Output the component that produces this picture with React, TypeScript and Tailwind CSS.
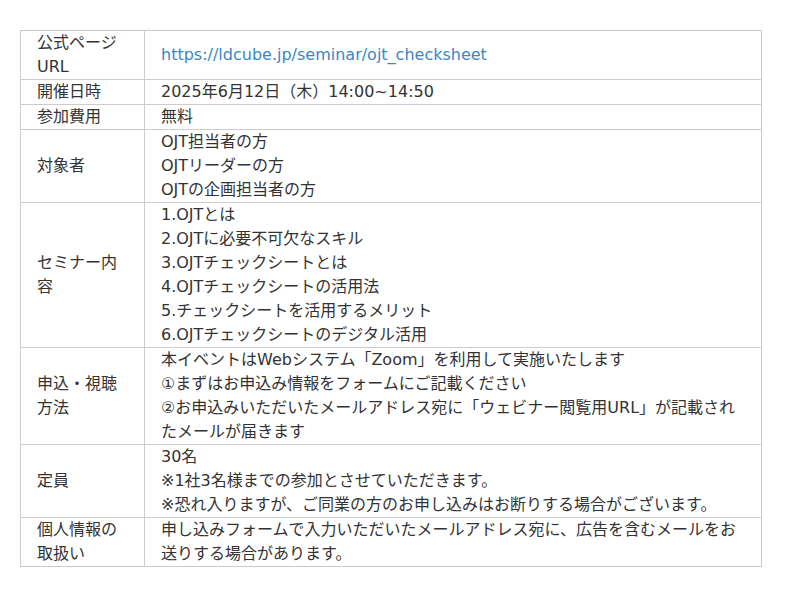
import React from "react";

const rows: { label: string; value: React.ReactNode }[] = [
  {
    label: "公式ページURL",
    value: (
      <a href="#" className="text-[#3a87c5] no-underline">
        https://ldcube.jp/seminar/ojt_checksheet
      </a>
    ),
  },
  { label: "開催日時", value: "2025年6月12日（木）14:00~14:50" },
  { label: "参加費用", value: "無料" },
  {
    label: "対象者",
    value: ["OJT担当者の方", "OJTリーダーの方", "OJTの企画担当者の方"],
  },
  {
    label: "セミナー内容",
    value: [
      "1.OJTとは",
      "2.OJTに必要不可欠なスキル",
      "3.OJTチェックシートとは",
      "4.OJTチェックシートの活用法",
      "5.チェックシートを活用するメリット",
      "6.OJTチェックシートのデジタル活用",
    ],
  },
  {
    label: "申込・視聴方法",
    value: [
      "本イベントはWebシステム「Zoom」を利用して実施いたします",
      "①まずはお申込み情報をフォームにご記載ください",
      "②お申込みいただいたメールアドレス宛に「ウェビナー閲覧用URL」が記載されたメールが届きます",
    ],
  },
  {
    label: "定員",
    value: [
      "30名",
      "※1社3名様までの参加とさせていただきます。",
      "※恐れ入りますが、ご同業の方のお申し込みはお断りする場合がございます。",
    ],
  },
  {
    label: "個人情報の取扱い",
    value: "申し込みフォームで入力いただいたメールアドレス宛に、広告を含むメールをお送りする場合があります。",
  },
];

export default function App() {
  return (
    <div
      className="w-[800px] h-[597px] bg-white pt-[30px] pl-[20px] text-[16px] leading-[24px] text-[#333333]"
      style={{ fontFamily: '"DejaVu Sans", "Noto Sans CJK JP", sans-serif' }}
    >
      <table className="w-[742px] border-collapse table-fixed">
        <colgroup>
          <col className="w-[124px]" />
          <col />
        </colgroup>
        <tbody>
          {rows.map((r, i) => (
            <tr key={i}>
              <td className="border border-[#cccccc] px-4 py-0 align-middle break-all">
                {r.label}
              </td>
              <td className="border border-[#cccccc] px-4 py-0 align-middle break-all">
                {Array.isArray(r.value)
                  ? r.value.map((v, j) => <div key={j}>{v}</div>)
                  : r.value}
              </td>
            </tr>
          ))}
        </tbody>
      </table>
    </div>
  );
}
